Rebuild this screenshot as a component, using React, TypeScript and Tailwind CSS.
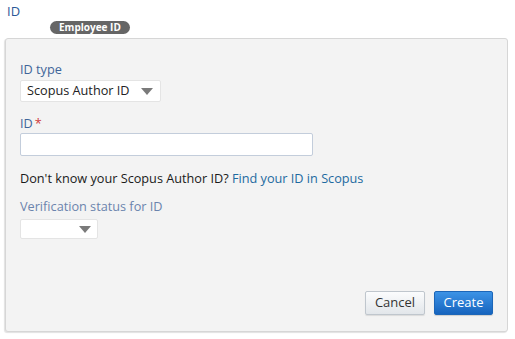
import React from "react";

function Arrow() {
  return (
    <svg width="12" height="7" viewBox="0 0 12 7" className="shrink-0">
      <polygon points="0,0 12,0 6,7" fill="#7a7a7a" />
    </svg>
  );
}

export default function App() {
  return (
    <div
      className="w-[515px] h-[339px] bg-white flex flex-col"
      style={{ fontFamily: '"Open Sans", "Noto Sans", sans-serif' }}
    >
      <div className="pl-[7px] pt-[3px] h-[19px] text-[13px] leading-[16px] text-[#2b5797]">ID</div>
      <div className="flex pl-[50px] h-[19px]">
        <div className="h-[13px] mt-[2px] px-[9px] rounded-full bg-[#666666] text-white text-[10px] leading-[13px] font-bold">
          Employee ID
        </div>
      </div>
      <div className="ml-[5px] w-[503px] h-[294px] rounded-[3px] border border-[#d6d6d6] bg-[#f3f3f3] shadow-[-1px_1px_1px_rgba(0,0,0,0.12)] flex flex-col pl-[14px] pr-[14px] pt-[22px] pb-[16px] text-[12.7px]">
        <div className="leading-[16px] text-[#3f6599]">ID type</div>
        <div className="mt-[3px] w-[141px] h-[22px] rounded-[2px] bg-white border border-[#e4e4e4] flex items-center justify-between pl-[6px] pr-[7px] text-[#222]">
          <span>Scopus Author ID</span>
          <Arrow />
        </div>
        <div className="mt-[13px] leading-[16px] text-[#3f6599]">
          ID<span className="text-[#d0393b] ml-[2px]">*</span>
        </div>
        <div className="mt-[2px] w-[293px] h-[23px] rounded-[2px] bg-white border border-[#c3cddb]" />
        <div className="mt-[14px] leading-[16px] text-[#1a1a1a]">
          Don't know your Scopus Author ID? <span className="text-[#1d6aa0]">Find your ID in Scopus</span>
        </div>
        <div className="mt-[12px] leading-[16px] text-[#6b84ad]">Verification status for ID</div>
        <div className="mt-[5px] w-[78px] h-[20px] rounded-[2px] bg-white border border-[#e4e4e4] flex items-center justify-end pr-[6px]">
          <Arrow />
        </div>
        <div className="mt-auto flex justify-end gap-[9px]">
          <button className="w-[60px] h-[24px] rounded-[2px] border border-[#bfc6cd] bg-gradient-to-b from-[#fbfcfd] to-[#e2e6ea] text-[13px] text-[#333] shadow-[0_1px_1px_rgba(0,0,0,0.1)]">
            Cancel
          </button>
          <button className="w-[59px] h-[24px] rounded-[2px] border border-[#1c66b8] bg-gradient-to-b from-[#3c93e6] to-[#1664be] text-[13px] text-white shadow-[0_1px_1px_rgba(0,0,0,0.15)]">
            Create
          </button>
        </div>
      </div>
    </div>
  );
}
